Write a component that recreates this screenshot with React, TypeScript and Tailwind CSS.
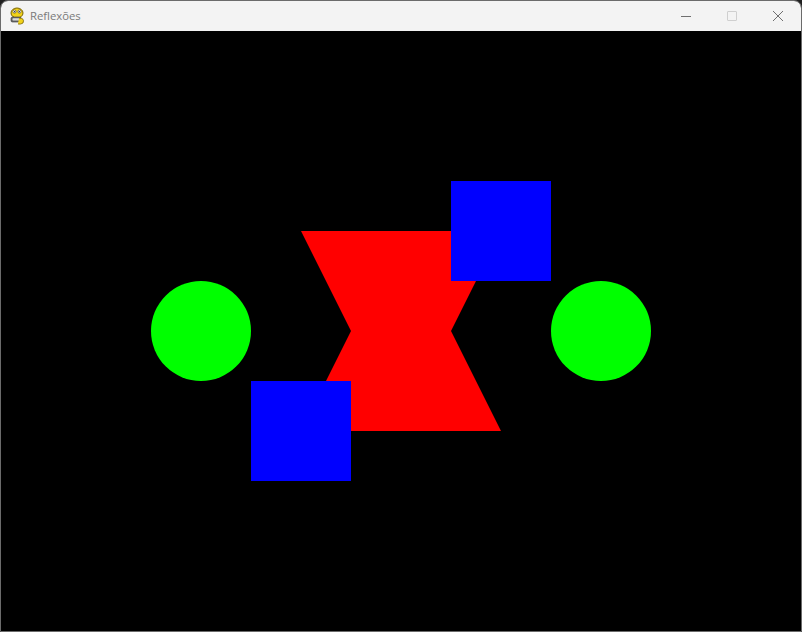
export default function App() {
  return (
    <div className="w-[802px] h-[632px] bg-[#202020]">
      <div className="w-[802px] h-[632px] flex flex-col border border-[#6b6b6b] rounded-t-[8px] overflow-hidden bg-black">
        {/* title bar */}
        <div className="h-[30px] shrink-0 flex items-center bg-[#f3f3f3]">
          <div className="w-[29px] h-[30px] flex items-center justify-center pl-[2px]">
            <svg width="18" height="18" viewBox="0 0 18 18">
              <ellipse cx="9" cy="6" rx="6" ry="5" fill="#f2d21a" stroke="#7a6400" strokeWidth="1" />
              <circle cx="6.5" cy="4.5" r="1.6" fill="#fff" stroke="#333" strokeWidth="0.6" />
              <circle cx="11.5" cy="4.5" r="1.6" fill="#fff" stroke="#333" strokeWidth="0.6" />
              <circle cx="6.7" cy="4.7" r="0.6" fill="#000" />
              <circle cx="11.3" cy="4.7" r="0.6" fill="#000" />
              <rect x="3" y="10" width="10" height="5" rx="1.5" fill="#6b6b6b" stroke="#333" strokeWidth="0.6" />
              <rect x="4.5" y="11.2" width="7" height="2.4" rx="0.8" fill="#d9d9d9" />
              <path d="M11 11 Q17 11 15 16 Q13 17.5 10 17" fill="#f2d21a" stroke="#7a6400" strokeWidth="0.8" />
            </svg>
          </div>
          <span className="text-[11.3px] text-[#7a7a7a] leading-none font-['Open_Sans',sans-serif] pb-[1px]">
            Reflexões
          </span>
          <div className="ml-auto flex h-full">
            <div className="w-[46px] h-full flex items-center justify-center">
              <div className="w-[10px] h-px bg-[#6f6f6f]" />
            </div>
            <div className="w-[46px] h-full flex items-center justify-center">
              <div className="w-[10px] h-[10px] border border-[#cfcfcf] rounded-[1px]" />
            </div>
            <div className="w-[46px] h-full flex items-center justify-center">
              <svg width="12" height="12" viewBox="0 0 12 12">
                <path d="M1 1 L11 11 M11 1 L1 11" stroke="#6f6f6f" strokeWidth="1" />
              </svg>
            </div>
          </div>
        </div>
        {/* canvas */}
        <svg width="800" height="600" viewBox="0 0 800 600" className="block shrink-0">
          <rect width="800" height="600" fill="#000" />
          <polygon points="300,200 500,200 450,300 500,400 300,400 350,300" fill="#ff0000" />
          <rect x="450" y="150" width="100" height="100" fill="#0000ff" />
          <rect x="250" y="350" width="100" height="100" fill="#0000ff" />
          <circle cx="200" cy="300" r="50" fill="#00ff00" />
          <circle cx="600" cy="300" r="50" fill="#00ff00" />
        </svg>
      </div>
    </div>
  );
}
